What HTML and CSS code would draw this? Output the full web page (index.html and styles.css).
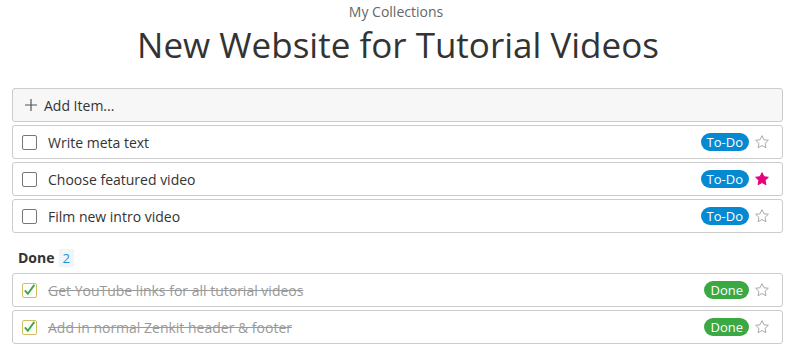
FILE: index.html
```html
<!DOCTYPE html>
<html lang="en">
<head>
    <meta charset="UTF-8">
    <title>New Website for Tutorial Videos</title>
    <link rel="stylesheet" href="styles.css">
</head>
<body>

<header class="head">
    <div class="crumb">My Collections</div>
    <h1 class="title">New Website for Tutorial Videos</h1>
</header>

<div class="list">
    <div class="add-item">
        <svg class="plus" width="12" height="12" viewBox="0 0 12 12"><path d="M6 0v12M0 6h12" stroke="#555" stroke-width="1.2" fill="none"/></svg>
        <span>Add Item...</span>
    </div>

    <div class="item">
        <span class="check"></span>
        <span class="text">Write meta text</span>
        <span class="badge todo">To-Do</span>
        <svg class="star" viewBox="0 0 24 24"><path d="M12 2.5l2.9 6.1 6.6.8-4.9 4.6 1.3 6.6L12 17.3l-5.9 3.3 1.3-6.6-4.9-4.6 6.6-.8z" fill="none" stroke="#aaa" stroke-width="1.5" stroke-linejoin="round"/></svg>
    </div>
    <div class="item">
        <span class="check"></span>
        <span class="text">Choose featured video</span>
        <span class="badge todo">To-Do</span>
        <svg class="star" viewBox="0 0 24 24"><path d="M12 2.5l2.9 6.1 6.6.8-4.9 4.6 1.3 6.6L12 17.3l-5.9 3.3 1.3-6.6-4.9-4.6 6.6-.8z" fill="#e5007d" stroke="#e5007d" stroke-width="1.5" stroke-linejoin="round"/></svg>
    </div>
    <div class="item">
        <span class="check"></span>
        <span class="text">Film new intro video</span>
        <span class="badge todo">To-Do</span>
        <svg class="star" viewBox="0 0 24 24"><path d="M12 2.5l2.9 6.1 6.6.8-4.9 4.6 1.3 6.6L12 17.3l-5.9 3.3 1.3-6.6-4.9-4.6 6.6-.8z" fill="none" stroke="#aaa" stroke-width="1.5" stroke-linejoin="round"/></svg>
    </div>

    <div class="section">
        <span class="section-name">Done</span>
        <span class="count">2</span>
    </div>

    <div class="item done">
        <span class="check checked"><svg viewBox="0 0 14 14"><path d="M2 7.5l3.2 3.5 7-9.5" fill="none" stroke="#3aa843" stroke-width="2"/></svg></span>
        <span class="text">Get YouTube links for all tutorial videos</span>
        <span class="badge green">Done</span>
        <svg class="star" viewBox="0 0 24 24"><path d="M12 2.5l2.9 6.1 6.6.8-4.9 4.6 1.3 6.6L12 17.3l-5.9 3.3 1.3-6.6-4.9-4.6 6.6-.8z" fill="none" stroke="#aaa" stroke-width="1.5" stroke-linejoin="round"/></svg>
    </div>
    <div class="item done">
        <span class="check checked"><svg viewBox="0 0 14 14"><path d="M2 7.5l3.2 3.5 7-9.5" fill="none" stroke="#3aa843" stroke-width="2"/></svg></span>
        <span class="text">Add in normal Zenkit header &amp; footer</span>
        <span class="badge green">Done</span>
        <svg class="star" viewBox="0 0 24 24"><path d="M12 2.5l2.9 6.1 6.6.8-4.9 4.6 1.3 6.6L12 17.3l-5.9 3.3 1.3-6.6-4.9-4.6 6.6-.8z" fill="none" stroke="#aaa" stroke-width="1.5" stroke-linejoin="round"/></svg>
    </div>
</div>

</body>
</html>
```

FILE: styles.css
```css
body {
    margin: 0;
    padding: 0;
    background: #fff;
    font-family: 'Open Sans', sans-serif;
    color: #333;
}

.head {
    text-align: center;
    padding-top: 2px;
}

.crumb {
    font-size: 14px;
    line-height: 19px;
    color: #666;
}

.title {
    margin: 0;
    font-size: 35px;
    font-weight: 400;
    line-height: 47px;
    color: #333;
    margin-left: 4px;
}

.list {
    padding: 20px 9px 0 12px;
    display: flex;
    flex-direction: column;
    gap: 3px;
}

.add-item {
    display: flex;
    align-items: center;
    gap: 7px;
    height: 32px;
    padding: 0 12px;
    background: #f7f7f7;
    border: 1px solid #ccc;
    border-radius: 3px;
    font-size: 14px;
    color: #333;
}

.item {
    display: flex;
    align-items: center;
    height: 32px;
    padding: 0 12px 0 9px;
    border: 1px solid #ccc;
    border-radius: 3px;
    font-size: 14px;
}

.check {
    width: 13px;
    height: 13px;
    border: 1px solid #777;
    border-radius: 2px;
    margin-right: 11px;
    display: flex;
}

.check svg {
    width: 14px;
    height: 14px;
    margin: -1px 0 0 0;
}

.check.checked {
    border-color: #cfbd62;
}

.text {
    flex: 1;
    color: #333;
}

.done .text {
    color: #9a9a9a;
    text-decoration: line-through;
}

.badge {
    height: 18px;
    line-height: 18px;
    padding: 0 6px;
    border-radius: 9px;
    color: #fff;
    font-size: 13px;
}

.todo {
    background: #0589d0;
}

.green {
    background: #3aa843;
}

.star {
    width: 16px;
    height: 16px;
    margin-left: 5px;
}

.section {
    display: flex;
    align-items: center;
    gap: 4px;
    padding: 12px 6px 3px;
}

.section-name {
    font-weight: 700;
    font-size: 14px;
    color: #333;
}

.count {
    background: #eef6fb;
    color: #1e90d6;
    font-size: 13px;
    padding: 0 4px;
    line-height: 18px;
}
```
